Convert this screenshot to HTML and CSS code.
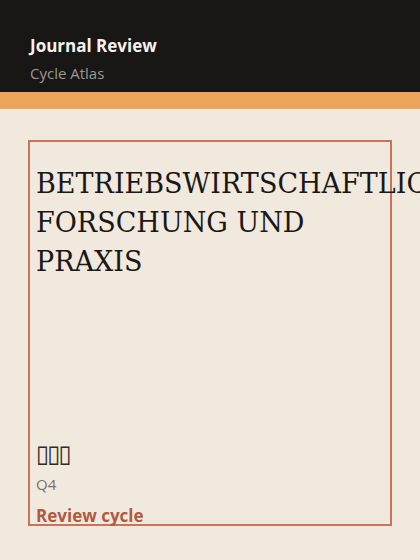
FILE: index.html
```html
<!DOCTYPE html>
<html>
<head>
    <title>Journal Review</title>
    <link rel="stylesheet" href="styles.css">
</head>
<body>
    <header class="topbar">
        <div class="brand">Journal Review</div>
        <div class="brand-sub">Cycle Atlas</div>
    </header>
    <div class="stripe"></div>

    <main class="page">
        <article class="journal-card">
            <h1 class="journal-title">BETRIEBSWIRTSCHAFTLICHE FORSCHUNG UND PRAXIS</h1>
            <div class="journal-meta">
                <div class="journal-field">&#x25AF;&#x25AF;&#x25AF;</div>
                <div class="journal-rank">Q4</div>
                <div class="journal-cycle">Review cycle</div>
            </div>
        </article>
    </main>
</body>
</html>
```

FILE: styles.css
```css
* {
    box-sizing: border-box;
}

body {
    margin: 0;
    font-family: "Open Sans", "Noto Sans", sans-serif;
    background-color: #f1e9de;
    overflow: hidden;
}

.topbar {
    background-color: #181716;
    padding: 34px 30px 10px;
    height: 92px;
}

.brand {
    color: #f6f2ec;
    font-size: 17px;
    font-weight: 700;
    line-height: 24px;
}

.brand-sub {
    color: #9c9893;
    font-size: 15px;
    line-height: 20px;
    margin-top: 5px;
}

.stripe {
    height: 17px;
    background-color: #eba55a;
}

.page {
    padding: 31px 28px 0;
}

.journal-card {
    height: 386px;
    border: 2px solid #c8735a;
    padding: 22px 6px 0;
    display: flex;
    flex-direction: column;
    justify-content: space-between;
}

.journal-title {
    margin: 0;
    font-family: "DejaVu Serif", Georgia, serif;
    font-weight: 400;
    font-size: 27px;
    line-height: 39px;
    color: #1a1816;
}

.journal-field {
    font-family: "DejaVu Sans", sans-serif;
    font-size: 24px;
    color: #2e2c2a;
    line-height: 24px;
    letter-spacing: -2px;
}

.journal-rank {
    font-size: 15px;
    color: #77716b;
    margin-top: 8px;
    line-height: 20px;
}

.journal-cycle {
    font-size: 17px;
    font-weight: 700;
    color: #b05a40;
    margin-top: 10px;
    margin-bottom: -4px;
    line-height: 24px;
}
```
